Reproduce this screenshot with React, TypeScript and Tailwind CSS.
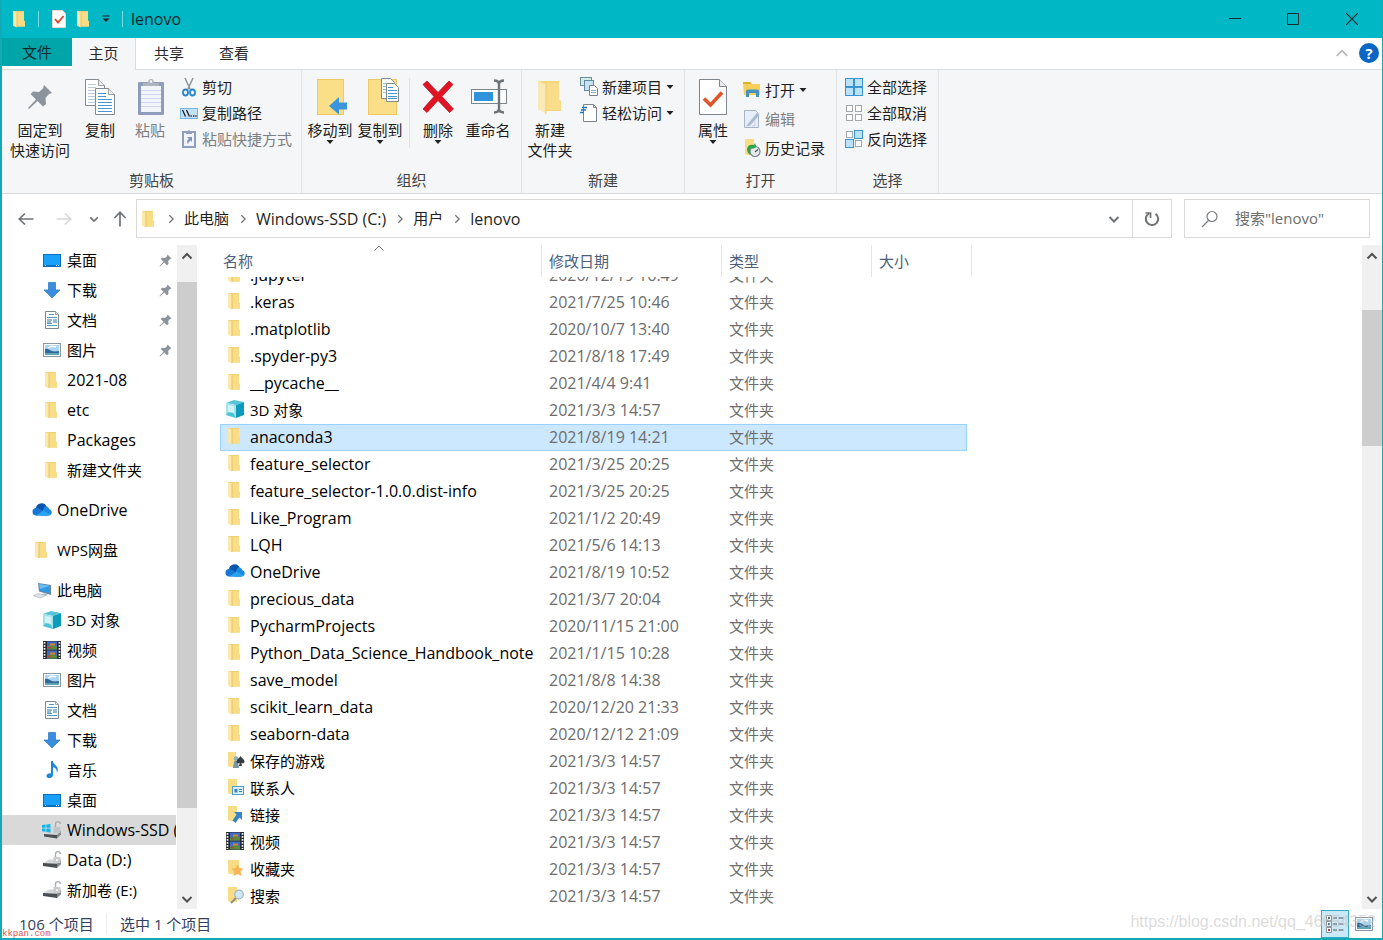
import React, { useLayoutEffect, useRef } from "react";

type IconProps = { className?: string };

interface NavItem {
  label: string;
  icon: React.FC<IconProps>;
  level?: number;
  pinned?: boolean;
  active?: boolean;
  gap?: boolean;
}

interface FileRow {
  name: string;
  date: string;
  icon?: React.FC<IconProps>;
  selected?: boolean;
}

/* ---------- icons ---------- */

const FolderIcon: React.FC<IconProps> = ({ className = "h-5 w-5" }) => (
  <svg viewBox="1 0 20 20" className={className}>
    <path d="M4 2h11v9.500l1 .5v5.500H6L4 16z" fill="#f0d074" />
    <path d="M8 3h7v9l1 .5v5H8z" fill="#f8dc86" />
    <path d="M4 2l4 1.500V18.500L4 16.500z" fill="#fbe8ad" />
    <path d="M8 3.500v14.500" stroke="#e3bd58" strokeWidth=".8" />
  </svg>
);

const CubeIcon: React.FC<IconProps> = ({ className = "h-5 w-5" }) => (
  <svg viewBox="0 0 20 20" className={className}>
    <path d="M1 4l8-3 10 2-8 3z" fill="#57c4d8" />
    <path d="M1 4l10 2v13L1 16z" fill="#a5e3ea" />
    <path d="M11 6l8-3v13l-8 3z" fill="#0c9bbd" />
    <path d="M1 16l5-6 5 9z" fill="#4cc4d6" />
    <path d="M3 6l6 1v7l-6-1z" fill="#d2f3f5" />
  </svg>
);

const CloudIcon: React.FC<IconProps> = ({ className = "h-5 w-5" }) => (
  <svg viewBox="0 0 20 20" className={className}>
    <path d="M4 9a5.500 5.500 0 0 1 10.500-2.500L16 13H3z" fill="#0a55ad" />
    <path d="M4 15.500a3.800 3.800 0 0 1-.5-7.500c2-.4 3.500.4 5 1.500l8 6z" fill="#1976d2" />
    <path d="M12 7.500c1.500-2 5-1 5 1.500 4 1 3.500 6.500-.5 6.500H9z" fill="#1a8be0" />
    <path d="M4 15.500l7.500-5 7 4.200q-1 .8-2 .8z" fill="#29a3ee" />
  </svg>
);

const DesktopIcon: React.FC<IconProps> = ({ className = "h-5 w-5" }) => (
  <svg viewBox="0 0 20 20" className={className}>
    <rect x="1.500" y="4.500" width="17" height="12" fill="#18a0fb" stroke="#0b6dbb" />
    <path d="M2 15.500h16" stroke="#0b6dbb" />
    <path d="M3 15.500h1M14 15.500h1M16 15.500h1" stroke="#d5efff" />
  </svg>
);

const DownloadIcon: React.FC<IconProps> = ({ className = "h-5 w-5" }) => (
  <svg viewBox="0 0 20 20" className={className}>
    <path d="M6.500 2.500h7V10h4.500l-8 8-8-8h4.500z" fill="#3b8ede" stroke="#2674c0" strokeWidth=".7" />
  </svg>
);

const DocumentIcon: React.FC<IconProps> = ({ className = "h-5 w-5" }) => (
  <svg viewBox="0 0 20 20" className={className}>
    <path d="M3.500 1.500h10l3 3v14h-13z" fill="#fff" stroke="#7d868d" />
    <path d="M13.500 1.500v3h3" fill="#dfe5e8" stroke="#7d868d" strokeWidth=".7" />
    <path d="M7 4.500h5M5 7.500h10M5 13.500h5M5 15.500h10" stroke="#4d9ac6" />
    <path d="M5 10h5M11 10h4M11 12h4M5 12h4" stroke="#2d7aa8" strokeWidth="1.200" />
  </svg>
);

const PictureIcon: React.FC<IconProps> = ({ className = "h-5 w-5" }) => (
  <svg viewBox="0 0 20 20" className={className}>
    <rect x="1.500" y="3.500" width="17" height="13" fill="#fff" stroke="#8a96a0" />
    <rect x="3" y="5" width="14" height="10" fill="#a9d4f2" />
    <path d="M3 9c3-1 4 1 7 2s5 0 7 0v3H3z" fill="#2f6a9b" />
    <path d="M3 13h14v2H3z" fill="#5fa3b5" />
    <path d="M6 8q4-3 8-1" stroke="#fff" fill="none" strokeWidth="1.500" />
  </svg>
);

const VideoIcon: React.FC<IconProps> = ({ className = "h-5 w-5" }) => (
  <svg viewBox="0 0 20 20" className={className}>
    <path d="M1 1h18v18H1z" fill="#2b2b33" />
    <path d="M2.500 2v16M17.500 2v16" stroke="#f4f4f4" strokeWidth="1.700" strokeDasharray="1.700 1.300" />
    <path d="M5 1.500h10v8H5z" fill="#3d6bc9" />
    <path d="M5 10.500h10v8H5z" fill="#3d6bc9" />
    <path d="M5 7q5-4 10 0v2.500H5zM5 16q5-4 10 0v2.500H5z" fill="#5c8c3b" />
    <path d="M8 4.500h5M8 13.500h5" stroke="#d9822b" strokeWidth="2" />
    <path d="M6 7.500h3M6 16.500h3" stroke="#b83a48" strokeWidth="1.500" />
  </svg>
);

const MusicIcon: React.FC<IconProps> = ({ className = "h-5 w-5" }) => (
  <svg viewBox="0 0 20 20" className={className}>
    <path d="M9 1h2c0 3.500 4.800 4.500 4.800 8.500 0 1.200-.3 2.200-1 3.200.3-3.200-1.100-4.700-3.800-5.400v7.700c0 3.500-6 4.200-6.500 1.200C4.300 13.800 7 13 9 13.400z" fill="#1e88d8" />
  </svg>
);

const ComputerIcon: React.FC<IconProps> = ({ className = "h-5 w-5" }) => (
  <svg viewBox="0 0 20 20" className={className}>
    <path d="M6 3l13 2v10L7 11.500z" fill="#6f8698" />
    <path d="M7 4l11 1.800v7.700L8 10.700z" fill="#2f9be8" />
    <path d="M7 4l11 1.800L8 9z" fill="#6abcf3" />
    <path d="M12 13.500l4 1-3 1.500-4-1z" fill="#a9b3ba" />
    <path d="M1 15.500l6-2 7 2-6 2.500z" fill="#dde3e7" stroke="#a6b0b8" strokeWidth=".6" />
  </svg>
);

const DriveIcon: React.FC<IconProps> = ({ className = "h-5 w-5" }) => (
  <svg viewBox="0 0 20 20" className={className}>
    <path d="M1 13l6-3.500h12l-4 4.500z" fill="#d5d8da" />
    <path d="M1 13l14 .7V18L1 16z" fill="#4a4f53" />
    <path d="M15 13.700l4-4v4.500L15 18z" fill="#83898e" />
    <path d="M13.500 7V4a2.400 2.400 0 0 1 4.800 0" fill="none" stroke="#a7adb1" strokeWidth="1.400" />
    <path d="M11.500 7h7v6h-7z" fill="#c8ccce" />
    <path d="M15 9v2" stroke="#fff" strokeWidth="1.400" />
  </svg>
);

const SystemDriveIcon: React.FC<IconProps> = ({ className = "h-5 w-5" }) => (
  <svg viewBox="0 0 20 20" className={className}>
    <path d="M2 14l6-3.500h11L15 15z" fill="#d5d8da" />
    <path d="M2 14l13 1v3.500L2 16.500z" fill="#4a4f53" />
    <path d="M15 15l4-4.500v4L15 18.500z" fill="#83898e" />
    <path d="M13.500 7V4a2.400 2.400 0 0 1 4.800 0" fill="none" stroke="#a7adb1" strokeWidth="1.400" />
    <path d="M11.500 7h7v6h-7z" fill="#c0c5c8" />
    <path d="M0 5l3.500-.5v3.200H0zM4.300 4.400L8.500 4v3.700H4.300zM0 8.400h3.500v3.400L0 11.300zM4.300 8.400h4.200v4l-4.200-.5z" fill="#12b5e5" />
  </svg>
);

const GamesIcon: React.FC<IconProps> = ({ className }) => (
  <svg viewBox="0 0 20 20" className={className}>
    <path d="M3 2h8v15H5l-2-1z" fill="#f8dc86" />
    <path d="M8 18c0-3 1-3 1-6 0-2 4-2 4 0 0 3 1 3 1 6z" fill="#7895a5" />
    <circle cx="11" cy="8.500" r="2.300" fill="#93aebb" />
    <path d="M15.500 6c1 2 4 3.500 4 5.500 0 1.800-2 2.300-3.200 1.300L17 16h-3l.7-3.200c-1.200 1-3.200.5-3.200-1.300 0-2 3-3.500 4-5.500z" fill="#333c41" />
  </svg>
);

const ContactsIcon: React.FC<IconProps> = ({ className }) => (
  <svg viewBox="0 0 20 20" className={className}>
    <path d="M3 2h9v15H5l-2-1z" fill="#f8dc86" />
    <rect x="7.500" y="9.500" width="11" height="8" fill="#d8effa" stroke="#559fc7" />
    <path d="M9.500 12h3v3.500h-3z" fill="#3884b8" />
    <path d="M14 12.500h3M14 14.500h3" stroke="#3884b8" />
  </svg>
);

const LinksIcon: React.FC<IconProps> = ({ className }) => (
  <svg viewBox="0 0 20 20" className={className}>
    <path d="M3 2h9v15H5l-2-1z" fill="#f8dc86" />
    <path d="M9 8h8v8l-2.500-2.500L10.500 19 7.500 16.500l4-6z" fill="#3785c6" />
  </svg>
);

const FavoritesIcon: React.FC<IconProps> = ({ className }) => (
  <svg viewBox="0 0 20 20" className={className}>
    <path d="M3 2h11v14H5l-2-1z" fill="#f8dc86" />
    <path d="M12.500 6l1.800 4 4.200.5-3 3 1 4.500-4-2-4 2 .8-4.500-3-3 4.200-.5z" fill="#f4b657" />
  </svg>
);

const SearchFolderIcon: React.FC<IconProps> = ({ className }) => (
  <svg viewBox="0 0 20 20" className={className}>
    <path d="M3 2h9v15H5l-2-1z" fill="#f8dc86" />
    <path d="M6 18l5-5" stroke="#8d8d86" strokeWidth="2" />
    <circle cx="14" cy="9.500" r="4.300" fill="#cfe8f6" stroke="#9db5c3" strokeWidth="1.200" />
  </svg>
);

const PinIcon: React.FC<IconProps> = ({ className }) => (
  <svg viewBox="0 0 26 26" className={className}>
    <path d="M17 1l8 8-3 1-3.500 4 .5 6-3 2.500-5.500-5.500L2 25l-1-1 8-8.500L3.500 10 6 7.500l6 .5 4-3.500z" fill="#8b949c" />
  </svg>
);

const Sheet = ({ x, y, blue }: { x: number; y: number; blue?: boolean }) => (
  <g transform={`translate(${x} ${y})`}>
    <path d="M.5.500h13l6 6v20H.5z" fill="#fff" stroke="#828a91" />
    <path d="M13.500.500v6h6" fill="#e7ebef" stroke="#828a91" strokeWidth=".8" />
    <path d="M3 5.500h8M3 8.500h8M3 11.500h14M3 14.500h14M3 17.500h14M3 20.500h14M3 23.500h14" stroke={blue ? "#4795d2" : "#b9cbe0"} />
  </g>
);

const CopyIcon = () => (
  <svg viewBox="0 0 32 38" className="h-[38px] w-8">
    <Sheet x={1} y={1} />
    <Sheet x={11} y={10} blue />
  </svg>
);

const PasteIcon = () => (
  <svg viewBox="0 0 32 38" className="h-[38px] w-8">
    <rect x="4" y="4" width="26" height="33" rx="1" fill="#8f9cbc" />
    <rect x="7" y="8" width="20" height="26" fill="#f3f5fc" />
    <path d="M7 12.500h20M7 16.500h20M7 20.500h20M7 24.500h20M7 28.500h20" stroke="#cfd7ec" />
    <path d="M9 8V5h5q0-4 3-4t3 4h5v3z" fill="#aeb5bf" />
    <circle cx="17" cy="3.500" r="1.200" fill="#fff" />
  </svg>
);

const ScissorsIcon = () => (
  <svg viewBox="0 0 18 20" className="h-5 w-[18px]">
    <path d="M5 1l5.500 12M13 1L7.500 13" stroke="#8a949c" strokeWidth="1.500" />
    <ellipse cx="5.500" cy="15.500" rx="2.500" ry="3" fill="none" stroke="#2c87c9" strokeWidth="1.800" />
    <ellipse cx="12.500" cy="15.500" rx="2.500" ry="3" fill="none" stroke="#2c87c9" strokeWidth="1.800" />
  </svg>
);

const CopyPathIcon = () => (
  <svg viewBox="0 0 18 20" className="h-5 w-[18px]">
    <rect x=".5" y="5.500" width="17" height="10" fill="#c4e1f7" stroke="#78b5df" />
    <path d="M2.500 7l3 6.500M6.500 7l3 6.500" stroke="#222" strokeWidth="1.300" />
    <path d="M10.500 13h1.300M13 13h1.300M15.300 13h1.300" stroke="#222" strokeWidth="1.300" />
  </svg>
);

const PasteShortcutIcon = () => (
  <svg viewBox="0 0 18 20" className="h-5 w-[18px]">
    <rect x="3" y="3" width="12" height="15" fill="#f1f4fa" stroke="#8f9fbb" strokeWidth="2" />
    <path d="M6 5V2h2q1-2 2 0h2v3z" fill="#8f9fbb" />
    <path d="M7 8h5v5l-1.500-1.500Q8 13 8 15 5.500 12 9 9.800z" fill="#8496b7" />
  </svg>
);

const MoveToIcon = () => (
  <svg viewBox="0 0 34 38" className="h-[38px] w-[34px]">
    <rect x="4.500" y="1.500" width="26" height="35" fill="#fbdf88" stroke="#ecc966" />
    <path d="M34 24.500v7h-8v5L16 28l10-9v5.500z" fill="#3b95de" />
  </svg>
);

const CopyToIcon = () => (
  <svg viewBox="0 0 38 38" className="h-[38px] w-[38px]">
    <rect x="7.500" y="1.500" width="28" height="35" fill="#fbdf88" stroke="#ecc966" />
    <path d="M20.500.500h9l4 4v16h-13z" fill="#fff" stroke="#828a91" />
    <path d="M22 5.500h8M22 8.500h8M22 11.500h8M22 14.500h8" stroke="#9dbddb" />
    <path d="M25.500 5.500h8l4 4v14h-12z" fill="#fff" stroke="#828a91" />
    <path d="M27 9.500h5M27 12.500h9M27 15.500h9M27 18.500h9M27 20.500h9" stroke="#4795d2" />
  </svg>
);

const DeleteIcon = () => (
  <svg viewBox="0 0 34 38" className="h-[38px] w-[34px]">
    <path d="M6 3l11 11.500L28 3l4 3.500L21 18.500 32.500 31l-4 3.500L17 22.500 6 34.500 2 31l11-12.500L2 6.500z" fill="#e01523" stroke="#b50d18" strokeWidth=".7" />
  </svg>
);

const RenameIcon = () => (
  <svg viewBox="0 0 38 38" className="h-[38px] w-[38px]">
    <rect x="2.500" y="11.500" width="35" height="14" fill="#fff" stroke="#7e868c" />
    <rect x="5" y="14" width="19" height="9" fill="#3193dc" />
    <path d="M25 2.500q5 0 5 4v24q0 4-5 4M35 2.500q-5 0-5 4v24q0 4 5 4" fill="none" stroke="#6e757a" strokeWidth="2.400" />
  </svg>
);

const NewFolderIcon = () => (
  <svg viewBox="0 0 26 38" className="h-[38px] w-[26px]">
    <path d="M1 3h21v19l2 1v10H6l-5-2z" fill="#f5d57c" />
    <path d="M9 5h13v17l2 1v9H9z" fill="#f9dd8a" />
    <path d="M1 3l8 3.500V37l-4-4-4-2z" fill="#fbe9b5" />
    <path d="M9 6.500V36" stroke="#e5c263" strokeWidth=".7" />
  </svg>
);

const NewItemIcon = () => (
  <svg viewBox="0 0 18 20" className="h-5 w-[18px]">
    <rect x=".5" y=".5" width="11" height="8" fill="#d3ebe8" stroke="#6c9098" />
    <rect x="4.500" y="3.500" width="9" height="10" fill="#c8e2f3" stroke="#6288a0" />
    <path d="M9.500 8.500h5l3 3v7h-8z" fill="#fff" stroke="#77828a" />
    <path d="M11 13.500h5M11 15.500h5" stroke="#7dacd0" />
  </svg>
);

const EasyAccessIcon = () => (
  <svg viewBox="0 0 18 20" className="h-5 w-[18px]">
    <path d="M3.500 1.500h10l3 3v14h-13z" fill="#fff" stroke="#7d868d" />
    <path d="M13.500 1.500v3h3" fill="none" stroke="#7d868d" />
    <path d="M2 4.500h5M1 7h5M0 9.500h4" stroke="#2473b8" strokeWidth="1.300" />
  </svg>
);

const PropertiesIcon = () => (
  <svg viewBox="0 0 30 38" className="h-[38px] w-[30px]">
    <path d="M1.500 1.500h20l7 7v28h-27z" fill="#fff" stroke="#7d868d" />
    <path d="M21.500 1.500v7h7" fill="#e8ecef" stroke="#7d868d" />
    <path d="M6 20.500l6.500 6.500L24 14.500" fill="none" stroke="#e05527" strokeWidth="3.600" />
  </svg>
);

const OpenIcon = () => (
  <svg viewBox="0 0 18 20" className="h-5 w-[18px]">
    <path d="M0 2h7l1.500 2H17v11H1z" fill="#f6cf58" />
    <path d="M0 2h7l1.500 2H0z" fill="#e2ad2e" />
    <path d="M3 17v-5.500q0-2 2-2h9q2 0 2 2V17h-3v-4H6v4z" fill="#4591c6" />
  </svg>
);

const EditIcon = () => (
  <svg viewBox="0 0 18 20" className="h-5 w-[18px]">
    <path d="M1.500 1.500h11l3 3v14h-14z" fill="#e8eef7" stroke="#a8b5c9" />
    <path d="M4 16L14 4l2.500 2L7 16.500l-3.500 1z" fill="#a9bad3" />
    <path d="M12 12v5H9" fill="none" stroke="#cbd5e4" />
  </svg>
);

const HistoryIcon = () => (
  <svg viewBox="0 0 18 20" className="h-5 w-[18px]">
    <path d="M2 1h9v16H4l-2-1z" fill="#f8dc86" />
    <circle cx="12" cy="13.500" r="5" fill="#e5eaed" stroke="#7d878d" strokeWidth="1.200" />
    <path d="M4 11q1-5 7-4l1-2 1.500 4-4 2-.3-1.500Q6 9.500 7.500 17 4 15 4 11z" fill="#2da44b" />
    <path d="M12 14l3-2.500" stroke="#4b5357" strokeWidth="1.200" />
  </svg>
);

const SelectIcon = ({ filled }: { filled: boolean[] }) => (
  <svg viewBox="0 0 18 20" className="h-5 w-[18px]">
    {filled.map((on, i) => (
      <rect
        key={i}
        x={on ? (i % 2 ? 9.5 : 0.5) : i % 2 ? 10.5 : 1.5}
        y={on ? (i > 1 ? 10.5 : 1.5) : i > 1 ? 11.5 : 2.5}
        width={on ? 8 : 6}
        height={on ? 8 : 6}
        fill={on ? "#bce2fa" : "#fff"}
        stroke={on ? "#3a94cf" : "#a3a8ac"}
      />
    ))}
  </svg>
);

const CheckDocIcon = () => (
  <svg viewBox="0 0 14 18" className="h-[18px] w-[14px] shrink-0">
    <path d="M.5.500h10l3 3v14H.5z" fill="#fff" stroke="#e9d6d3" />
    <path d="M3 9l3 3.500L11.500 6" fill="none" stroke="#d8452f" strokeWidth="1.800" />
  </svg>
);

const Chevron = ({ dir, className = "h-3 w-3", width = 1.5 }: { dir: "up" | "down" | "right"; className?: string; width?: number }) => {
  const paths = { up: "M1.500 8.500L6 4l4.500 4.500", down: "M1.500 4L6 8.500 10.500 4", right: "M4 1.500L8.500 6 4 10.500" };
  return (
    <svg viewBox="0 0 12 12" className={className}>
      <path d={paths[dir]} fill="none" stroke="currentColor" strokeWidth={width} />
    </svg>
  );
};

const Caret = ({ className = "" }: IconProps) => (
  <svg viewBox="0 0 8 4" className={`h-1 w-2 ${className}`}>
    <path d="M.5 0h7L4 4z" fill="#222" />
  </svg>
);

/* ---------- data ---------- */

const navItems: NavItem[] = [
  { label: "桌面", icon: DesktopIcon, pinned: true },
  { label: "下载", icon: DownloadIcon, pinned: true },
  { label: "文档", icon: DocumentIcon, pinned: true },
  { label: "图片", icon: PictureIcon, pinned: true },
  { label: "2021-08", icon: FolderIcon },
  { label: "etc", icon: FolderIcon },
  { label: "Packages", icon: FolderIcon },
  { label: "新建文件夹", icon: FolderIcon },
  { label: "OneDrive", icon: CloudIcon, level: 1, gap: true },
  { label: "WPS网盘", icon: FolderIcon, level: 1, gap: true },
  { label: "此电脑", icon: ComputerIcon, level: 1, gap: true },
  { label: "3D 对象", icon: CubeIcon },
  { label: "视频", icon: VideoIcon },
  { label: "图片", icon: PictureIcon },
  { label: "文档", icon: DocumentIcon },
  { label: "下载", icon: DownloadIcon },
  { label: "音乐", icon: MusicIcon },
  { label: "桌面", icon: DesktopIcon },
  { label: "Windows-SSD (C:)", icon: SystemDriveIcon, active: true },
  { label: "Data (D:)", icon: DriveIcon },
  { label: "新加卷 (E:)", icon: DriveIcon },
];

const files: FileRow[] = [
  { name: ".jupyter", date: "2020/12/19 16:49" },
  { name: ".keras", date: "2021/7/25 10:46" },
  { name: ".matplotlib", date: "2020/10/7 13:40" },
  { name: ".spyder-py3", date: "2021/8/18 17:49" },
  { name: "__pycache__", date: "2021/4/4 9:41" },
  { name: "3D 对象", date: "2021/3/3 14:57", icon: CubeIcon },
  { name: "anaconda3", date: "2021/8/19 14:21", selected: true },
  { name: "feature_selector", date: "2021/3/25 20:25" },
  { name: "feature_selector-1.0.0.dist-info", date: "2021/3/25 20:25" },
  { name: "Like_Program", date: "2021/1/2 20:49" },
  { name: "LQH", date: "2021/5/6 14:13" },
  { name: "OneDrive", date: "2021/8/19 10:52", icon: CloudIcon },
  { name: "precious_data", date: "2021/3/7 20:04" },
  { name: "PycharmProjects", date: "2020/11/15 21:00" },
  { name: "Python_Data_Science_Handbook_note", date: "2021/1/15 10:28" },
  { name: "save_model", date: "2021/8/8 14:38" },
  { name: "scikit_learn_data", date: "2020/12/20 21:33" },
  { name: "seaborn-data", date: "2020/12/12 21:09" },
  { name: "保存的游戏", date: "2021/3/3 14:57", icon: GamesIcon },
  { name: "联系人", date: "2021/3/3 14:57", icon: ContactsIcon },
  { name: "链接", date: "2021/3/3 14:57", icon: LinksIcon },
  { name: "视频", date: "2021/3/3 14:57", icon: VideoIcon },
  { name: "收藏夹", date: "2021/3/3 14:57", icon: FavoritesIcon },
  { name: "搜索", date: "2021/3/3 14:57", icon: SearchFolderIcon },
];

// latin names look small next to the chinese ones, so they get one size more
const nameSize = (name: string) => (/^[\x20-\x7e]+$/.test(name) ? "text-base" : "text-[15px]");

/* ---------- ribbon ---------- */

const BigButton = ({
  icon,
  lines,
  caret,
  disabled,
  className = "w-[50px]",
}: {
  icon: React.ReactNode;
  lines: string[];
  caret?: boolean;
  disabled?: boolean;
  className?: string;
}) => (
  <button
    type="button"
    disabled={disabled}
    className={`flex flex-col items-center whitespace-nowrap pt-2 leading-5 disabled:text-[#7c7f83] ${className}`}
  >
    <span className="mb-1 flex h-[38px] items-center">{icon}</span>
    {lines.map((line) => (
      <span key={line}>{line}</span>
    ))}
    {caret && <Caret />}
  </button>
);

const SmallButton = ({
  icon,
  label,
  caret,
  disabled,
}: {
  icon: React.ReactNode;
  label: string;
  caret?: boolean;
  disabled?: boolean;
}) => (
  <button
    type="button"
    disabled={disabled}
    className="flex items-center gap-1 whitespace-nowrap leading-[26px] disabled:text-[#7c7f83]"
  >
    {icon}
    <span>{label}</span>
    {caret && <Caret />}
  </button>
);

const RibbonGroup = ({
  title,
  className,
  children,
}: {
  title: string;
  className: string;
  children: React.ReactNode;
}) => (
  <section className={`flex shrink-0 flex-col border-r border-[#e2e3e4] ${className}`}>
    <div className="flex flex-1 items-start pl-[3px]">{children}</div>
    <h2 className="pb-px text-center leading-6 text-[#444]">{title}</h2>
  </section>
);

const Ribbon = () => (
  <div className="flex h-[124px] shrink-0 border-b border-[#d9dadb] bg-[#f5f6f7] text-[#1e1e1e]">
    <RibbonGroup title="剪贴板" className="w-[300px]">
      <BigButton
        icon={<PinIcon className="h-[26px] w-[26px]" />}
        lines={["固定到", "快速访问"]}
        className="w-[70px]"
      />
      <BigButton icon={<CopyIcon />} lines={["复制"]} />
      <BigButton icon={<PasteIcon />} lines={["粘贴"]} disabled />
      <div className="flex flex-col pl-[5px] pt-1">
        <SmallButton icon={<ScissorsIcon />} label="剪切" />
        <SmallButton icon={<CopyPathIcon />} label="复制路径" />
        <SmallButton icon={<PasteShortcutIcon />} label="粘贴快捷方式" disabled />
      </div>
    </RibbonGroup>
    <RibbonGroup title="组织" className="w-[220px]">
      <BigButton icon={<MoveToIcon />} lines={["移动到"]} caret />
      <BigButton icon={<CopyToIcon />} lines={["复制到"]} caret />
      <div className="ml-1 mr-[3px] mt-2 h-[70px] border-r border-[#e2e3e4]" />
      <BigButton icon={<DeleteIcon />} lines={["删除"]} caret />
      <BigButton icon={<RenameIcon />} lines={["重命名"]} />
    </RibbonGroup>
    <RibbonGroup title="新建" className="w-[163px]">
      <BigButton icon={<NewFolderIcon />} lines={["新建", "文件夹"]} />
      <div className="flex flex-col pl-[5px] pt-1">
        <SmallButton icon={<NewItemIcon />} label="新建项目" caret />
        <SmallButton icon={<EasyAccessIcon />} label="轻松访问" caret />
      </div>
    </RibbonGroup>
    <RibbonGroup title="打开" className="w-[152px]">
      <BigButton icon={<PropertiesIcon />} lines={["属性"]} caret />
      <div className="flex flex-col gap-[3px] pl-[5px] pt-[7px]">
        <SmallButton icon={<OpenIcon />} label="打开" caret />
        <SmallButton icon={<EditIcon />} label="编辑" disabled />
        <SmallButton icon={<HistoryIcon />} label="历史记录" />
      </div>
    </RibbonGroup>
    <RibbonGroup title="选择" className="w-[102px]">
      <div className="flex flex-col pl-[5px] pt-1">
        <SmallButton icon={<SelectIcon filled={[true, true, true, true]} />} label="全部选择" />
        <SmallButton icon={<SelectIcon filled={[false, false, false, false]} />} label="全部取消" />
        <SmallButton icon={<SelectIcon filled={[false, true, true, false]} />} label="反向选择" />
      </div>
    </RibbonGroup>
  </div>
);

/* ---------- window parts ---------- */

const TitleBar = () => (
  <header className="flex h-[38px] shrink-0 items-center bg-[#00b7c5] text-[#12282b]">
    <div className="flex items-center pl-2">
      <FolderIcon />
      <span className="ml-2 h-4 border-l border-[#7fd9e0]" />
      <button type="button" aria-label="属性" className="ml-[13px]">
        <CheckDocIcon />
      </button>
      <button type="button" aria-label="新建文件夹" className="ml-2">
        <FolderIcon />
      </button>
      <button type="button" aria-label="自定义快速访问工具栏" className="ml-2">
        <svg viewBox="0 0 8 8" className="h-2 w-2">
          <path d="M.5 1h7" stroke="#222" />
          <path d="M.5 3.500h7L4 7z" fill="#222" />
        </svg>
      </button>
      <span className="ml-3 h-4 border-l border-[#7fd9e0]" />
      <h1 className="ml-2 text-base">lenovo</h1>
    </div>
    <div className="ml-auto flex text-[#1b2a2c]">
      <button type="button" aria-label="最小化" className="flex h-[38px] w-[58px] items-center justify-center">
        <svg viewBox="0 0 12 12" className="h-3 w-3">
          <path d="M0 5.500h12" stroke="currentColor" />
        </svg>
      </button>
      <button type="button" aria-label="最大化" className="flex h-[38px] w-[58px] items-center justify-center">
        <svg viewBox="0 0 12 12" className="h-3 w-3">
          <path d="M.5.500h11v11H.5z" fill="none" stroke="currentColor" />
        </svg>
      </button>
      <button type="button" aria-label="关闭" className="flex h-[38px] w-[60px] items-center justify-center">
        <svg viewBox="0 0 12 12" className="h-3 w-3">
          <path d="M0 0l12 12M12 0L0 12" stroke="currentColor" strokeWidth="1.200" />
        </svg>
      </button>
    </div>
  </header>
);

const Tabs = () => (
  <nav className="flex h-8 shrink-0 items-stretch border-b border-[#dcddde] text-[#2a2a2a]">
    <button type="button" className="mb-[3px] w-[70px] bg-[#00a5a9] text-[#10292b]">
      文件
    </button>
    <button type="button" className="-mb-px w-16 border-r border-[#dcddde] bg-[#f5f6f7] pb-[2px]">
      主页
    </button>
    <button type="button" className="w-[66px] pb-px">
      共享
    </button>
    <button type="button" className="w-16 pb-px">
      查看
    </button>
    <div className="ml-auto flex items-center gap-[10px] pb-px pr-[3px]">
      <button type="button" aria-label="最小化功能区" className="text-[#b5b8ba]">
        <Chevron dir="up" className="h-[14px] w-[14px]" />
      </button>
      <button
        type="button"
        aria-label="帮助"
        className="h-5 w-5 rounded-full bg-[#0b66c3] text-center font-bold leading-5 text-white"
      >
        ?
      </button>
    </div>
  </nav>
);

const Arrow = ({ dir }: { dir: "left" | "right" | "up" }) => {
  const paths = {
    left: "M15.500 8H1M7 2.500L1.200 8 7 13.500",
    right: "M.5 8H15M9 2.500L14.800 8 9 13.500",
    up: "M8 15.500V1M2.500 7L8 1.200 13.500 7",
  };
  return (
    <svg viewBox="0 0 16 16" className="h-4 w-4">
      <path d={paths[dir]} fill="none" stroke="currentColor" strokeWidth="1.700" />
    </svg>
  );
};

const crumbs = ["此电脑", "Windows-SSD (C:)", "用户", "lenovo"];

const AddressBar = () => (
  <div className="flex h-[51px] shrink-0 items-center pb-[2px] pr-3 text-[#1f1f1f]">
    <div className="flex w-[134px] shrink-0 items-center pl-4 text-[#6f7275]">
      <button type="button" aria-label="后退">
        <Arrow dir="left" />
      </button>
      <button type="button" aria-label="前进" disabled className="ml-[22px] text-[#d6d8d9]">
        <Arrow dir="right" />
      </button>
      <button type="button" aria-label="最近浏览的位置" className="ml-[17px]">
        <Chevron dir="down" className="h-[10px] w-[10px]" width={2} />
      </button>
      <button type="button" aria-label="上移" className="ml-[13px]">
        <Arrow dir="up" />
      </button>
    </div>
    <div className="flex h-[39px] flex-1 items-center border border-[#d9d9d9]">
      <span className="pl-[2px]">
        <FolderIcon />
      </span>
      <ol className="flex items-center pl-[5px]">
        {crumbs.map((crumb) => (
          <li key={crumb} className="flex items-center text-[#6f7275]">
            <Chevron dir="right" className="mx-[2px] h-[10px] w-[10px]" />
            <a href="#" className={`pl-[6px] pr-[7px] text-[#1f1f1f] ${nameSize(crumb)}`}>
              {crumb}
            </a>
          </li>
        ))}
      </ol>
      <button type="button" aria-label="以前的位置" className="ml-auto px-3 text-[#6f7275]">
        <Chevron dir="down" width={2} />
      </button>
      <button
        type="button"
        aria-label="刷新"
        className="flex h-full w-[39px] items-center justify-center border-l border-[#d9d9d9] text-[#6f7275]"
      >
        <svg viewBox="0 0 16 16" className="h-4 w-4">
          <path d="M11.500 2.800a6.200 6.200 0 1 1-6.500-.3" fill="none" stroke="currentColor" strokeWidth="2" />
          <path d="M1.500 2h5v5" fill="none" stroke="currentColor" strokeWidth="1.700" />
        </svg>
      </button>
    </div>
    <label className="ml-3 flex h-[39px] w-[186px] items-center border border-[#d9d9d9] pl-4">
      <svg viewBox="0 0 18 18" className="h-[18px] w-[18px] shrink-0" aria-label="搜索">
        <circle cx="11" cy="6.500" r="5" fill="none" stroke="#7a7d80" strokeWidth="1.200" />
        <path d="M7.500 10.500L1 17" stroke="#7a7d80" strokeWidth="1.300" />
      </svg>
      <input
        type="text"
        placeholder={'搜索"lenovo"'}
        className="ml-4 w-full min-w-0 outline-none placeholder:text-[#6d6d6d]"
      />
    </label>
  </div>
);

const SideNav = () => (
  <aside className="flex w-[195px] shrink-0">
    <ul className="w-[174px] overflow-hidden">
      {navItems.map((item, i) => {
        const Icon = item.icon;
        return (
          <li key={i} className={item.gap ? "pt-[10px]" : ""}>
            <a
              href="#"
              className={`flex h-[30px] items-center gap-[5px] whitespace-nowrap ${
                item.level === 1 ? "pl-[30px]" : "pl-10"
              } ${item.active ? "bg-[#d9d9d9]" : ""}`}
            >
              <Icon className="h-5 w-5 shrink-0" />
              <span className={nameSize(item.label)}>{item.label}</span>
              {item.pinned && <PinIcon className="ml-auto mr-1 h-[13px] w-[13px]" />}
            </a>
          </li>
        );
      })}
    </ul>
    <div className="ml-px flex w-5 flex-col items-center bg-[#f0f0f0] text-[#505050]">
      <button type="button" aria-label="向上滚动" className="flex h-[37px] items-start pt-[5px]">
        <Chevron dir="up" width={2} />
      </button>
      <div className="h-[526px] w-full bg-[#cdcdcd]" />
      <button type="button" aria-label="向下滚动" className="mt-auto flex h-5 items-center">
        <Chevron dir="down" width={2} />
      </button>
    </div>
  </aside>
);

const FileTable = () => {
  const scroller = useRef<HTMLDivElement>(null);

  // open the list scrolled a little, half of the first row sits under the header
  useLayoutEffect(() => {
    if (scroller.current) scroller.current.scrollTop = 15;
  }, []);

  return (
    <div ref={scroller} className="ml-[23px] min-w-0 flex-1 overflow-hidden">
      <table className="w-[752px] table-fixed border-separate border-spacing-0 text-left">
        <colgroup>
          <col className="w-[322px]" />
          <col className="w-[180px]" />
          <col className="w-[150px]" />
          <col className="w-[95px]" />
          <col className="w-[5px]" />
        </colgroup>
        <thead className="sticky top-0 z-10 bg-white text-[#4c607a]">
          <tr className="h-8">
            <th className="relative border-r border-[#e5e5e5] p-0 pl-[3px] font-normal">
              名称
              <Chevron dir="up" className="absolute -top-[3px] left-[153px] h-3 w-3 text-[#777]" width={1} />
            </th>
            <th className="border-r border-[#e5e5e5] p-0 pl-[7px] font-normal">修改日期</th>
            <th className="border-r border-[#e5e5e5] p-0 pl-[7px] font-normal">类型</th>
            <th className="p-0 pl-[7px] font-normal" colSpan={2}>
              <span className="-my-1 flex h-8 items-center border-r border-[#e5e5e5]">大小</span>
            </th>
          </tr>
        </thead>
        <tbody>
          {files.map((file) => {
            const Icon = file.icon || FolderIcon;
            const cell = file.selected ? "border-y border-[#99d1ff] bg-[#cce8ff]" : "";
            return (
              <tr key={file.name} className="h-[27px]">
                <td className={`p-0 ${cell} ${file.selected ? "border-l pl-1" : "pl-[5px]"}`}>
                  <span className="flex items-center gap-[5px] whitespace-nowrap text-black">
                    <Icon className="mb-[3px] h-5 w-5 shrink-0" />
                    <span className={`${nameSize(file.name)} leading-[25px]`}>{file.name}</span>
                  </span>
                </td>
                <td className={`p-0 pl-[7px] text-base leading-[25px] text-[#6d6d6d] ${cell}`}>{file.date}</td>
                <td className={`p-0 pl-[7px] leading-[25px] text-[#6d6d6d] ${cell}`}>文件夹</td>
                <td className={`p-0 ${cell} ${file.selected ? "border-r" : ""}`} />
                <td className="p-0" />
              </tr>
            );
          })}
        </tbody>
      </table>
    </div>
  );
};

const StatusBar = () => (
  <footer className="relative flex h-[29px] shrink-0 items-center pr-1 pt-px text-[#34415e]">
    <span className="w-[105px] border-r border-[#eceff1] pl-[17px]">106 个项目</span>
    <span className="pl-[13px]">选中 1 个项目</span>
    <div className="ml-auto flex h-full">
      <button
        type="button"
        aria-label="详细信息"
        className="flex w-7 items-center justify-center border border-[#35a9c8] bg-[#cbe8f6]"
      >
        <svg viewBox="0 0 18 18" className="h-[18px] w-[18px]">
          <path d="M.5.500h5v5h-5zM.5 6.500h5v5h-5zM.5 12.500h5v5h-5z" fill="#fff" stroke="#8a9198" />
          <path d="M2 3h2M2 9h2" stroke="#456a8c" strokeWidth="2" />
          <path d="M2 15h2" stroke="#b93b45" strokeWidth="2" />
          <path d="M7 3h4M12.500 3h5M7 9h4M12.500 9h5M7 15h4M12.500 15h5" stroke="#4c555c" />
        </svg>
      </button>
      <button type="button" aria-label="大图标" className="flex w-[29px] items-center justify-center">
        <PictureIcon />
      </button>
    </div>
    <span className="pointer-events-none absolute bottom-1 right-[6px] whitespace-nowrap text-base text-[#c4c4c4]/60 [font-family:'Liberation_Sans',sans-serif]">
      https://blog.csdn.net/qq_46654352
    </span>
    <span className="pointer-events-none absolute -bottom-px left-0 text-[9px] leading-[10px] text-[#d9534f] [font-family:'Liberation_Mono',monospace]">
      kkpan.com
    </span>
  </footer>
);

export default function App() {
  return (
    <div className="flex h-screen flex-col overflow-hidden border-b-2 border-l-2 border-r border-[#14aab5] bg-white text-[15px] [font-family:'Open_Sans','Noto_Sans_CJK_SC',sans-serif]">
      <TitleBar />
      <Tabs />
      <Ribbon />
      <AddressBar />
      <main className="flex min-h-0 flex-1">
        <SideNav />
        <FileTable />
        <div className="flex w-5 flex-col items-center bg-[#f0f0f0] text-[#505050]">
          <button type="button" aria-label="向上滚动" className="flex h-[65px] items-start pt-[5px]">
            <Chevron dir="up" width={2} />
          </button>
          <div className="h-[136px] w-full bg-[#cdcdcd]" />
          <button type="button" aria-label="向下滚动" className="mt-auto flex h-5 items-center">
            <Chevron dir="down" width={2} />
          </button>
        </div>
      </main>
      <StatusBar />
    </div>
  );
}
